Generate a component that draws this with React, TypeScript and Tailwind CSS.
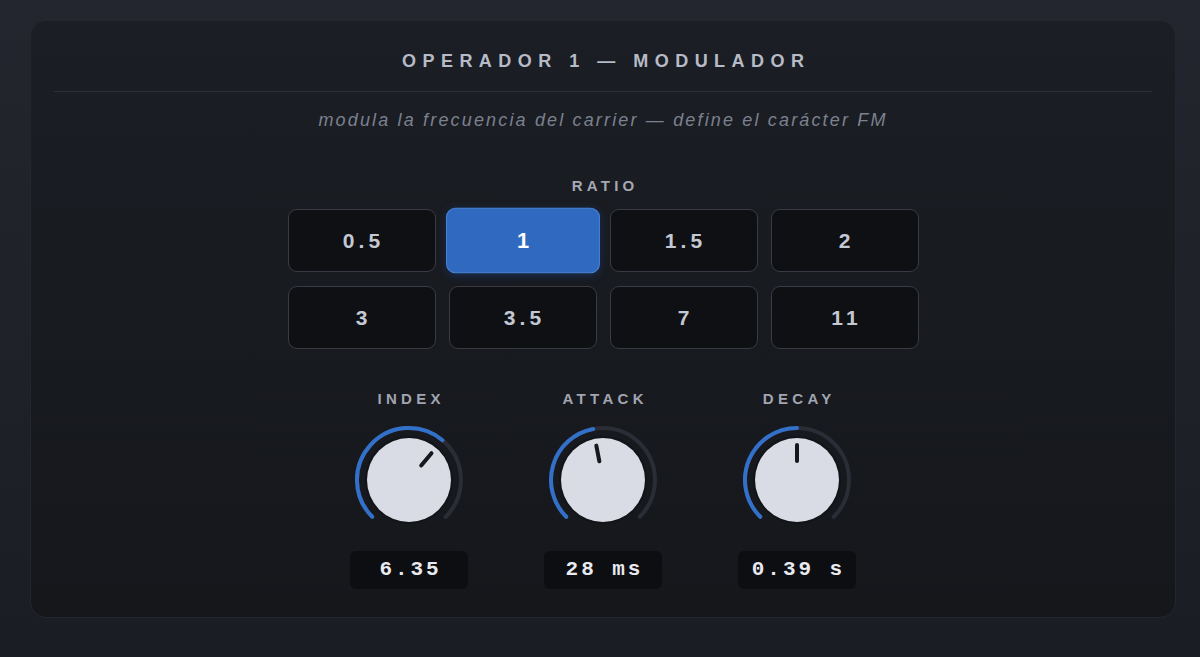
import React from "react";

const ratios = ["0.5", "1", "1.5", "2", "3", "3.5", "7", "11"];

const knobs = [
  { label: "INDEX", value: "6.35", angle: 40 },
  { label: "ATTACK", value: "28 ms", angle: -11 },
  { label: "DECAY", value: "0.39 s", angle: 0 },
];

// angle measured from 12 o'clock, clockwise
const polar = (cx: number, cy: number, r: number, deg: number) => {
  const a = ((deg - 90) * Math.PI) / 180;
  return [cx + r * Math.cos(a), cy + r * Math.sin(a)];
};

const arc = (cx: number, cy: number, r: number, from: number, to: number) => {
  const [x1, y1] = polar(cx, cy, r, from);
  const [x2, y2] = polar(cx, cy, r, to);
  const large = to - from > 180 ? 1 : 0;
  return `M ${x1} ${y1} A ${r} ${r} 0 ${large} 1 ${x2} ${y2}`;
};

const Knob = ({ angle }: { angle: number }) => {
  const c = 58;
  const [px1, py1] = polar(c, c, 19, angle);
  const [px2, py2] = polar(c, c, 35, angle);
  return (
    <svg width="116" height="116" viewBox="0 0 116 116">
      <path d={arc(c, c, 52, -135, 135)} stroke="#2a2d35" strokeWidth="4" fill="none" strokeLinecap="round" />
      <path d={arc(c, c, 52, -135, angle)} stroke="#3370c9" strokeWidth="4" fill="none" strokeLinecap="round" />
      <circle cx={c} cy={c} r="44" fill="#121419" />
      <circle cx={c} cy={c} r="42" fill="#d9dce4" />
      <line x1={px1} y1={py1} x2={px2} y2={py2} stroke="#16181d" strokeWidth="4" strokeLinecap="round" />
    </svg>
  );
};

export default function App() {
  return (
    <div
      className="w-[1200px] h-[657px] bg-gradient-to-b from-[#23262e] to-[#1a1d23] pt-[20px] pl-[30px] pr-[24px]"
      style={{ fontFamily: '"Liberation Sans", Arial, sans-serif' }}
    >
      <div className="h-[598px] rounded-[16px] border border-[#23262d] bg-gradient-to-b from-[#1b1e24] to-[#15171b] px-[23px] pt-[28px]">
        <div className="text-center text-[18px] leading-[24px] font-bold tracking-[0.36em] pl-[0.36em] text-[#b6bbc7] pb-[18px] border-b border-[#2c2f37]">
          OPERADOR 1 — MODULADOR
        </div>
        <div className="mt-[16px] text-center italic text-[18px] leading-[24px] tracking-[0.12em] text-[#7c8190]">
          modula la frecuencia del carrier — define el carácter FM
        </div>

        <div className="mt-[45px] text-center text-[15px] leading-[18px] font-bold tracking-[0.28em] pl-[0.28em] text-[#a3a8b4]">
          RATIO
        </div>
        <div className="mt-[14px] mx-auto w-[631px] grid grid-cols-4 gap-x-[13px] gap-y-[14px]">
          {ratios.map((r) =>
            r === "1" ? (
              <button
                key={r}
                className="h-[63px] rounded-[9px] bg-[#3069c0] border border-[#4a82d6] scale-[1.04] shadow-[0_2px_8px_rgba(30,80,170,0.35)] text-[21px] font-bold tracking-[0.2em] pl-[0.2em] text-white"
              >
                {r}
              </button>
            ) : (
              <button
                key={r}
                className="h-[63px] rounded-[9px] bg-[#0f1014] border border-[#383b44] text-[21px] font-bold tracking-[0.2em] pl-[0.2em] text-[#c3c8d3]"
              >
                {r}
              </button>
            )
          )}
        </div>

        <div className="mt-[41px] flex justify-center gap-x-[76px]">
          {knobs.map((k) => (
            <div key={k.label} className="w-[118px] flex flex-col items-center">
              <div className="text-[15px] leading-[18px] font-bold tracking-[0.29em] pl-[0.29em] text-[#a0a5b1]">
                {k.label}
              </div>
              <div className="mt-[14px]">
                <Knob angle={k.angle} />
              </div>
              <div
                className="mt-[13px] w-[118px] h-[38px] rounded-[6px] bg-[#0d0e11] flex items-center justify-center text-[21px] font-bold tracking-[0.14em] pl-[0.14em] text-[#e8eaef]"
                style={{ fontFamily: '"Liberation Mono", "DejaVu Sans Mono", monospace' }}
              >
                {k.value}
              </div>
            </div>
          ))}
        </div>
      </div>
    </div>
  );
}
